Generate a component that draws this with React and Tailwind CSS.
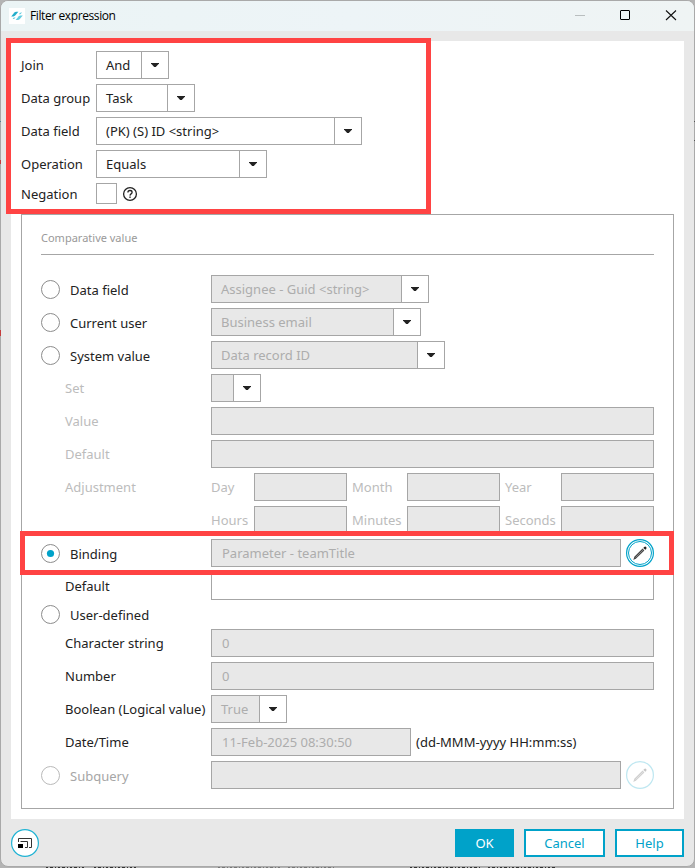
import React from 'react';

const Arrow = () => (
    <svg width="8" height="4" viewBox="0 0 8 4" className="block">
        <path d="M0 0h8v0.4L4.8 4h-1.6L0 0.4z" fill="#222" />
    </svg>
);

const Combo = ({ value, width, disabled }) => (
    <div className={`flex h-7 shrink-0 border border-[#a6a6a6] bg-white ${width}`}>
        <div className={`flex-1 min-w-0 pl-[9px] leading-[26px] ${disabled ? 'bg-[#e8e8e8] text-[#adadad]' : 'text-[#222]'}`}>{value}</div>
        <div className="flex w-[27px] items-center justify-center border-l border-[#a6a6a6]">
            <Arrow />
        </div>
    </div>
);

const Field = ({ value, className = '', enabled }) => (
    <div className={`h-7 border border-[#a6a6a6] pl-2.5 leading-[26px] text-[#adadad] ${enabled ? 'bg-white' : 'bg-[#e8e8e8]'} ${className}`}>{value}</div>
);

const Radio = ({ label, checked, disabled }) => (
    <div className={`flex w-[170px] shrink-0 items-center ${disabled ? 'text-[#a6a6a6]' : 'text-[#222]'}`}>
        <svg width="20" height="20" viewBox="0 0 20 20" className="-ml-px mr-2.5 shrink-0">
            <circle cx="10.5" cy="10.5" r="9" fill="#fff" stroke={disabled ? '#b9b9b9' : '#8c8c8c'} />
            {checked && <circle cx="10.5" cy="10.5" r="3.6" fill="#00a2c9" />}
        </svg>
        <span className="relative top-px">{label}</span>
    </div>
);

const Label = ({ children, muted }) => (
    <div className={`w-[146px] shrink-0 whitespace-nowrap ${muted ? 'text-[#bcbcbc]' : 'text-[#222]'}`}>{children}</div>
);

const Row = ({ children, indent }) => (
    <div className={`flex h-7 items-center ${indent ? 'pl-6' : ''}`}>{children}</div>
);

const TopRow = ({ label, children }) => (
    <div className="flex h-7 items-center">
        <div className="w-[75px] shrink-0 whitespace-nowrap">{label}</div>
        {children}
    </div>
);

const EditButton = ({ active }) => (
    <svg width="28" height="28" viewBox="0 0 28 28" className={`ml-[5px] shrink-0 ${active ? '' : 'opacity-25'}`}>
        <circle cx="14" cy="14" r="13.4" fill="#fff" stroke="#00a2c9" strokeWidth="1.2" />
        {active && <circle cx="14" cy="14" r="11.5" fill="none" stroke="#00a2c9" strokeWidth="1" />}
        <path d="M7.3 20.9l1-3.1 8.3-8.2 1.8 1.8-8.3 8.2z" fill="#444" />
        <path d="M9.6 18.5l7.7-7.7" stroke="#b5b5b5" strokeWidth="0.6" />
        <path d="M17.3 8.9l.9-.9q1.1-.8 1.9.1.8.8.1 1.8l-.9.9z" fill="#222" />
    </svg>
);

const Adjustment = ({ labels }) => (
    <div className="flex flex-1 items-center text-[#bcbcbc]">
        <span className="w-[43px] shrink-0">{labels[0]}</span>
        <Field className="w-[93px]" />
        <span className="ml-[5px] w-[55px] shrink-0">{labels[1]}</span>
        <Field className="w-[93px]" />
        <span className="ml-[5px] w-14 shrink-0">{labels[2]}</span>
        <Field className="w-[93px]" />
    </div>
);

const TitleBar = () => (
    <div className="flex h-[30px] shrink-0 items-center bg-gradient-to-r from-[#ebf4f5] via-[#edf4f7] to-[#eff4f4] pl-2">
        <svg width="16" height="16" viewBox="0 0 16 16" className="bg-white">
            <path d="M2.2 8.4L5.4 4.6q.7-.8 1.7-.8h2.3L6.2 7.6q-.7.8-1.7.8z" fill="#22aecb" />
            <path d="M6.6 12l3.2-3.8q.7-.8 1.7-.8h2.3l-3.2 3.8q-.7.8-1.7.8z" fill="#62cce0" />
            <path d="M3.6 10.9l1.2-1.4h1.8l-.7.8q-.5.6-1.2.6zM9.8 6.3l1.1-1.3q.5-.6 1.2-.6h.9l-1.1 1.3q-.5.6-1.2.6z" fill="#62cce0" />
        </svg>
        <span className="ml-[5px] flex-1 font-['Open_Sans','Noto_Sans',sans-serif] text-[12px] tracking-[-0.4px] text-black">Filter expression</span>
        <svg width="120" height="30" viewBox="0 0 120 30">
            <path d="M1 14.5h10" stroke="#b9bebf" />
            <rect x="46.5" y="9.5" width="9" height="9" rx="0.5" fill="none" stroke="#000" />
            <path d="M92 9.5l10 9.5M102 9.5L92 19" stroke="#111" strokeWidth="1.1" />
        </svg>
    </div>
);

const App = () => (
    <div className="relative h-[868px] w-[695px] overflow-hidden bg-[#b4b4b4] font-['Noto_Sans',sans-serif] text-[13px] leading-[18px] text-[#222]">
        <div className="relative z-10 flex h-[867px] w-[695px] flex-col overflow-hidden rounded-lg border border-[#a9a9a9] bg-[#e8e8e8]">
            <TitleBar />
            <div className="mx-2.5 mt-2.5 h-[778px] w-[673px] shrink-0 bg-white px-2.5 pt-2.5">
                <div className="flex flex-col gap-[5px]">
                    <TopRow label="Join"><Combo value="And" width="w-[73px]" /></TopRow>
                    <TopRow label="Data group"><Combo value="Task" width="w-[99px]" /></TopRow>
                    <TopRow label="Data field"><Combo value="(PK) (S) ID <string>" width="w-[266px]" /></TopRow>
                    <TopRow label="Operation"><Combo value="Equals" width="w-[171px]" /></TopRow>
                </div>
                <div className="mt-[5px] flex h-[21px] items-center">
                    <div className="w-[75px]">Negation</div>
                    <div className="size-[21px] border border-[#a6a6a6]" />
                    <svg width="16" height="16" viewBox="0 0 16 16" className="ml-[5px]">
                        <circle cx="8" cy="8" r="6.4" fill="none" stroke="#222" strokeWidth="1.3" />
                        <path d="M5.9 6.5q0-2 2.1-2t2.1 1.8q0 .9-1 1.6T8 9.6" fill="none" stroke="#222" strokeWidth="1.3" />
                        <rect x="7.3" y="10.5" width="1.4" height="1.4" fill="#222" />
                    </svg>
                </div>

                <div className="mt-2.5 h-[595px] w-[653px] border border-[#a6a6a6] px-[19px]">
                    <div className="h-10 border-b border-[#a6a6a6] pt-[14px] text-[11px] text-[#999]">Comparative value</div>
                    <div className="mt-5 flex flex-col gap-[5px]">
                        <Row><Radio label="Data field" /><Combo disabled value="Assignee - Guid <string>" width="w-[218px]" /></Row>
                        <Row><Radio label="Current user" /><Combo disabled value="Business email" width="w-[210px]" /></Row>
                        <Row><Radio label="System value" /><Combo disabled value="Data record ID" width="w-[234px]" /></Row>
                        <Row indent><Label muted>Set</Label><Combo disabled value="" width="w-[50px]" /></Row>
                        <Row indent><Label muted>Value</Label><Field className="flex-1" /></Row>
                        <Row indent><Label muted>Default</Label><Field className="flex-1" /></Row>
                        <Row indent><Label muted>Adjustment</Label><Adjustment labels={['Day', 'Month', 'Year']} /></Row>
                        <Row indent><Label muted /><Adjustment labels={['Hours', 'Minutes', 'Seconds']} /></Row>
                        <Row><Radio label="Binding" checked /><Field className="w-[410px]" value="Parameter - teamTitle" /><EditButton active /></Row>
                        <Row indent><Label>Default</Label><Field enabled className="flex-1" /></Row>
                    </div>
                    <div className="mt-1 mb-[5px] flex h-5 items-center">
                        <Radio label="User-defined" />
                    </div>
                    <div className="flex flex-col gap-[5px]">
                        <Row indent><Label>Character string</Label><Field className="flex-1" value="0" /></Row>
                        <Row indent><Label>Number</Label><Field className="flex-1" value="0" /></Row>
                        <Row indent><Label>Boolean (Logical value)</Label><Combo disabled value="True" width="w-[76px]" /></Row>
                        <Row indent>
                            <Label>Date/Time</Label>
                            <Field className="w-[200px]" value="11-Feb-2025 08:30:50" />
                            <span className="ml-[5px]">(dd-MMM-yyyy HH:mm:ss)</span>
                        </Row>
                        <Row><Radio label="Subquery" disabled /><Field className="w-[410px]" /><EditButton /></Row>
                    </div>
                </div>
            </div>

            <div className="flex h-12 items-center px-2.5">
                <svg width="28" height="28" viewBox="0 0 28 28" className="mr-auto">
                    <circle cx="14" cy="14" r="13.4" fill="#fff" stroke="#1fb2d3" strokeWidth="1.2" />
                    <path d="M7.5 13V9.5h13v9H18M9.5 12.5h7v6H14" fill="none" stroke="#333" />
                    <rect x="7" y="15" width="5" height="4" fill="#000" />
                </svg>
                <button className="h-7 w-[59px] bg-[#00a2c9] text-white">OK</button>
                <button className="ml-2.5 h-7 w-[81px] border-2 border-[#00a2c9] bg-white text-[#00a2c9]">Cancel</button>
                <button className="ml-2.5 h-7 w-[69px] border-2 border-[#00a2c9] bg-white text-[#00a2c9]">Help</button>
            </div>
        </div>

        {/* edges of the page behind the dialog */}
        <div className="absolute left-0 top-[160px] z-10 h-1 w-px bg-[#c43c3c]" />
        <div className="absolute left-0 top-[330px] z-10 h-1.5 w-px bg-[#c43c3c]" />
        <div className="absolute left-0 top-[121px] z-10 h-px w-px bg-[#4b7f92]" />
        <div className="absolute right-0 top-[121px] z-10 h-5 w-px border-y border-[#555] bg-[#a9a9a9]" />
        <svg width="695" height="1" viewBox="0 0 695 1" className="absolute bottom-0 left-0">
            <path d="M46 .5h38M94 .5h42M410 .5h70M488 .5h68" stroke="#333" strokeDasharray="2 2 3 2 1 2" />
            <path d="M218 .5h62M288 .5h46" stroke="#777" strokeDasharray="2 2 3 2 1 2" />
        </svg>

        {/* highlight frames */}
        <div className="absolute left-[6px] top-[38px] z-20 h-[176px] w-[425px] border-5 border-[#ff4343]" />
        <div className="absolute left-[20px] top-[531px] z-20 h-11 w-[654px] border-5 border-[#ff4343]" />
    </div>
);

export default App;
